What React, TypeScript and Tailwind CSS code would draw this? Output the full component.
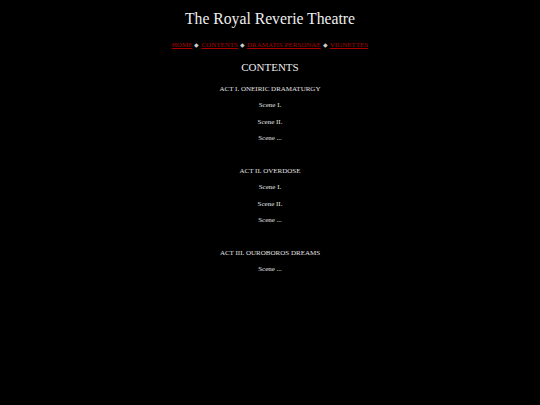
import React from "react";

const acts = [
  { title: "ACT I. ONEIRIC DRAMATURGY", scenes: ["Scene I.", "Scene II.", "Scene ..."] },
  { title: "ACT II. OVERDOSE", scenes: ["Scene I.", "Scene II.", "Scene ..."] },
  { title: "ACT III. OUROBOROS DREAMS", scenes: ["Scene ..."] },
];

export default function App() {
  return (
    <div className="min-h-[405px] w-full bg-black text-[#e2e2e2] flex flex-col items-center" style={{ fontFamily: '"Liberation Serif", serif' }}>
      <h1 className="mt-[9px] text-[15.7px] leading-[20px] text-[#eeeeee]">The Royal Reverie Theatre</h1>
      <nav className="mt-[11px] text-[7px] leading-[10px] flex items-center gap-[2px]">
        <a className="text-[#aa0000] underline">HOME</a>
        <span className="text-[#cccccc] text-[6px]">◆</span>
        <a className="text-[#aa0000] underline">CONTENTS</a>
        <span className="text-[#cccccc] text-[6px]">◆</span>
        <a className="text-[#aa0000] underline">DRAMATIS PERSONAE</a>
        <span className="text-[#cccccc] text-[6px]">◆</span>
        <a className="text-[#aa0000] underline">VIGNETTES</a>
      </nav>
      <h2 className="mt-[10px] text-[11px] leading-[14px] text-[#eeeeee]">CONTENTS</h2>
      <div className="mt-[10px] flex flex-col items-center text-[7px] leading-[10px]">
        {acts.map((a, i) => (
          <div key={i} className="flex flex-col items-center gap-[6.4px] mb-[22.7px]">
            <div>{a.title}</div>
            {a.scenes.map((s, j) => (
              <div key={j}>{s}</div>
            ))}
          </div>
        ))}
      </div>
    </div>
  );
}
